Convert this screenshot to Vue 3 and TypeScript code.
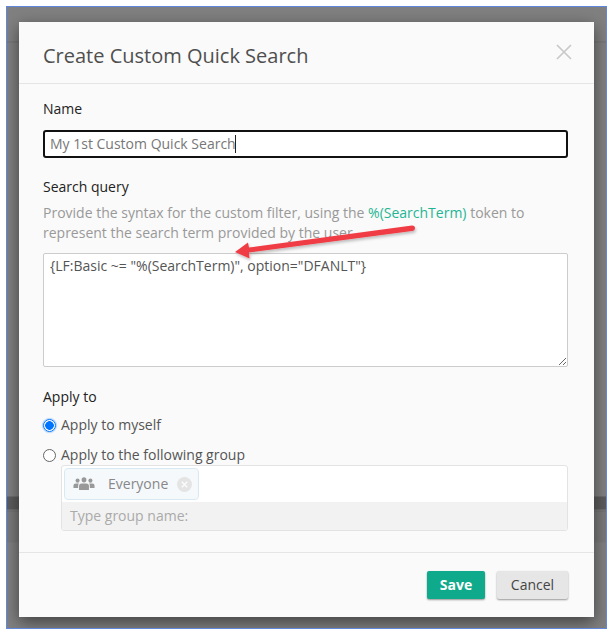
<script setup lang="ts">
const query = '{LF:Basic ~= "%(SearchTerm)", option="DFANLT"}'
</script>

<template>
  <div class="page">
    <div class="frame">
      <section class="modal">
        <header class="head">
          <h1>Create Custom Quick Search</h1>
          <svg class="close" width="16" height="16" viewBox="0 0 16 16" aria-label="Close">
            <path d="M1 1 15 15M15 1 1 15" stroke="#c9c9c9" stroke-width="1.7" fill="none" />
          </svg>
        </header>
        <div class="body">
          <div class="label first">Name</div>
          <div class="name-input">My 1st Custom Quick Search<i class="caret"></i></div>
          <div class="label query-label">Search query</div>
          <p class="help">
            Provide the syntax for the custom filter, using the
            <span class="token">%(SearchTerm)</span> token to<br />represent the search term provided by the user.
          </p>
          <textarea class="query" :value="query" spellcheck="false"></textarea>
          <div class="label apply-label">Apply to</div>
          <label class="radio one"><input type="radio" name="apply" checked />Apply to myself</label>
          <label class="radio two"><input type="radio" name="apply" />Apply to the following group</label>
          <div class="group">
            <div class="chips">
              <span class="chip">
                <svg width="22" height="14" viewBox="0 0 24 14" fill="#999" preserveAspectRatio="none">
                  <circle cx="5" cy="3.6" r="2.2" />
                  <circle cx="12" cy="2.8" r="2.6" />
                  <circle cx="19" cy="3.6" r="2.2" />
                  <path d="M0.5 11V8.6Q0.5 6.6 3 6.6H6.5Q5.6 7.6 5.6 9V11Z" />
                  <path d="M23.5 11V8.6Q23.5 6.6 21 6.6H17.5Q18.4 7.6 18.4 9V11Z" />
                  <path d="M6.6 13V9.2Q6.6 6.6 9.4 6.6H14.6Q17.4 6.6 17.4 9.2V13Z" />
                </svg>
                <span class="chip-text">Everyone</span>
                <svg width="15" height="15" viewBox="0 0 15 15">
                  <circle cx="7.5" cy="7.5" r="7.5" fill="#e4e4e4" />
                  <path d="M4.8 4.8 10.2 10.2M10.2 4.8 4.8 10.2" stroke="#fafafa" stroke-width="1.6" />
                </svg>
              </span>
            </div>
            <div class="group-input">Type group name:</div>
          </div>
        </div>
        <footer class="foot">
          <button class="btn save" type="button">Save</button>
          <button class="btn cancel" type="button">Cancel</button>
        </footer>
      </section>
    </div>
    <svg class="arrow" width="200" height="50" viewBox="0 0 200 50">
      <defs>
        <filter id="arrow-shadow" x="-10%" y="-30%" width="120%" height="170%">
          <feDropShadow dx="1" dy="2" stdDeviation="1.5" flood-color="#000" flood-opacity="0.25" />
        </filter>
      </defs>
      <path
        d="M188 6Q188 8.5 185 9L22 30.5 22.5 36.5 8 30 21 20.5 22 25.5 185 3.5Q188 3.5 188 6Z"
        fill="#f03e45"
        filter="url(#arrow-shadow)"
      />
    </svg>
  </div>
</template>

<style>
html,
body {
  margin: 0;
  background: #fff;
}
</style>

<style scoped>
.page {
  position: relative;
  width: 613px;
  height: 636px;
  padding: 6px 6px 7px 6px;
  box-sizing: border-box;
  font-family: "Open Sans", "Liberation Sans", sans-serif;
  font-size: 14px;
  color: #555;
}
.frame {
  width: 601px;
  height: 623px;
  box-sizing: border-box;
  border: 1px solid #5f87dc;
  padding: 15px 12px 0 12px;
  background: linear-gradient(
    to bottom,
    #808080 0,
    #808080 34px,
    #727272 35px,
    #808080 36px,
    #808080 489px,
    #5c5c5c 490px,
    #5c5c5c 502px,
    #808080 503px,
    #6c6c6c 504px,
    #7a7a7a 505px,
    #7a7a7a 535px,
    #808080 536px
  );
  overflow: hidden;
}
.modal {
  width: 575px;
  height: 595px;
  background: #fafafa;
  box-shadow: 0 5px 15px rgba(0, 0, 0, 0.5);
  display: flex;
  flex-direction: column;
}
.head {
  height: 62px;
  box-sizing: border-box;
  padding: 0 22px 0 24px;
  border-bottom: 1px solid #e5e5e5;
  display: flex;
  align-items: center;
  justify-content: space-between;
}
h1 {
  margin: 7px 0 0;
  font-size: 20px;
  font-weight: 500;
  line-height: 28px;
  color: #4f4f4f;
}
.close {
  margin-top: -2px;
}
.body {
  flex: 1;
  padding: 0 26px 0 24px;
}
.label {
  font-weight: 500;
  line-height: 20px;
  color: #222;
}
.first {
  margin-top: 15px;
}
.name-input {
  margin-top: 11px;
  height: 28px;
  box-sizing: border-box;
  border: 2px solid #111;
  border-radius: 3px;
  background: #fff;
  padding-left: 5px;
  line-height: 24px;
  color: #777;
  display: flex;
  align-items: center;
}
.caret {
  width: 1px;
  height: 18px;
  margin-left: -1px;
  background: #222;
}
.query-label {
  margin-top: 19px;
}
.help {
  margin: 6px 0 0;
  line-height: 20px;
  color: #999;
}
.token {
  color: #1fb594;
  font-weight: 500;
}
.query {
  display: block;
  margin-top: 10px;
  width: 100%;
  height: 114px;
  box-sizing: border-box;
  border: 1px solid #ccc;
  border-radius: 2px;
  padding: 2px 6px;
  font: inherit;
  line-height: 20px;
  color: #555;
  background: #fff;
  outline: none;
}
.apply-label {
  margin-top: 20px;
}
.radio {
  display: flex;
  align-items: center;
  line-height: 20px;
  color: #555;
}
.radio input {
  appearance: none;
  width: 13px;
  height: 13px;
  box-sizing: border-box;
  margin: 0 5px 0 0;
  border: 1px solid #666;
  border-radius: 50%;
  background: #fff;
}
.radio input:checked {
  border-color: #0075ff;
  background: radial-gradient(circle, #0075ff 0, #0075ff 4px, #fff 4.6px);
  box-shadow: 0 0 1px 1px #b5d4f7;
}
.one {
  margin-top: 8px;
}
.two {
  margin-top: 10px;
}
.group {
  margin: 0 0 0 18px;
  height: 66px;
  box-sizing: border-box;
  border: 1px solid #e3e3e3;
  border-radius: 3px;
  background: #fff;
  overflow: hidden;
}
.chips {
  height: 36px;
  box-sizing: border-box;
  padding: 2px;
}
.chip {
  width: 135px;
  height: 32px;
  box-sizing: border-box;
  border: 1px solid #d9e9f3;
  border-radius: 4px;
  background: #f5f9fc;
  display: flex;
  align-items: center;
  padding-left: 8px;
  color: #888;
}
.chip-text {
  margin: -2px 9px 0 13px;
}
.group-input {
  height: 28px;
  padding-left: 8px;
  background: #f2f2f2;
  line-height: 28px;
  color: #aaa;
}
.foot {
  height: 65px;
  box-sizing: border-box;
  border-top: 1px solid #e5e5e5;
  padding: 18px 26px 0 0;
  display: flex;
  justify-content: flex-end;
  gap: 12px;
  align-items: flex-start;
}
.btn {
  height: 28px;
  border: 0;
  border-radius: 2px;
  font-family: inherit;
  font-size: 14px;
  line-height: 26px;
  padding: 0;
  box-shadow: 0 1px 2px rgba(0, 0, 0, 0.4);
}
.save {
  width: 58px;
  background: #0fa98b;
  color: #fff;
  font-weight: 700;
}
.cancel {
  width: 71px;
  background: #e6e6e6;
  color: #444;
}
.arrow {
  position: absolute;
  left: 227px;
  top: 222px;
  pointer-events: none;
}
</style>
